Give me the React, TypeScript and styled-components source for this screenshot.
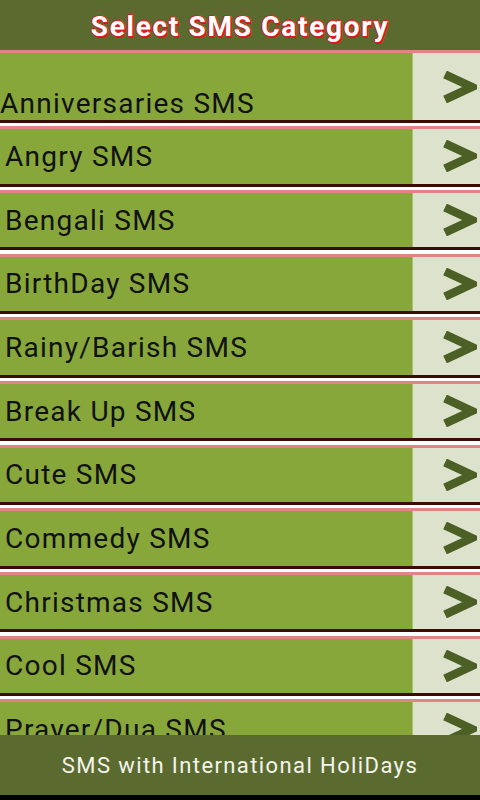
import React from "react";
import styled, { createGlobalStyle } from "styled-components";

const Global = createGlobalStyle`
  html, body { margin: 0; padding: 0; background: #000; }
  body { font-family: Roboto, "Noto Sans", "Liberation Sans", sans-serif; }
`;

const Screen = styled.div`
  width: 480px;
  height: 800px;
  display: flex;
  flex-direction: column;
  overflow: hidden;
  background: #000;
`;

const Header = styled.header`
  height: 50px;
  flex: none;
  background: #5b6b30;
  display: flex;
  align-items: center;
  justify-content: center;
  padding-top: 2px;
  box-sizing: border-box;
`;

const Title = styled.h1`
  margin: 0;
  font-family: Roboto, "Liberation Sans", sans-serif;
  font-weight: 700;
  font-size: 28px;
  color: #fff;
  letter-spacing: 1.7px;
  text-shadow: 1px 0 0 #e02020, -1px 0 0 #e02020, 0 1px 0 #e02020,
    0 -1px 0 #e02020, 1.5px 1.5px 0 #d01818;
`;

const List = styled.div`
  flex: 1;
  overflow: hidden;
  background: #fff;
  display: flex;
  flex-direction: column;
`;

const Item = styled.div`
  flex: none;
  display: flex;
  flex-direction: column;
  border-top: 3px solid #e08484;
  border-bottom: 3px solid #3a0c04;
  margin-bottom: 3.33px;
`;

const Content = styled.div<{ $first?: boolean }>`
  height: ${(p) => (p.$first ? 67 : 54.33)}px;
  display: flex;
  align-items: stretch;
`;

const Label = styled.div<{ $first?: boolean }>`
  flex: 1;
  background: #87a73b;
  display: flex;
  align-items: ${(p) => (p.$first ? "flex-end" : "center")};
  padding-left: ${(p) => (p.$first ? 0 : 5)}px;
  padding-top: ${(p) => (p.$first ? 0 : 2)}px;
  font-family: Roboto, "Liberation Sans", sans-serif;
  font-size: 28px;
  letter-spacing: 1.25px;
  line-height: 1.1;
  color: #111;
  white-space: nowrap;
  overflow: hidden;
  border-right: 1px solid #a9c168;
`;

const Panel = styled.div`
  width: 67px;
  flex: none;
  background: #dce2cb;
  display: flex;
  align-items: center;
  justify-content: flex-end;
  padding-right: 3px;
  box-sizing: border-box;
`;

const Footer = styled.footer`
  height: 60px;
  flex: none;
  background: #5b6b30;
  display: flex;
  align-items: center;
  justify-content: center;
  color: #f4f4ec;
  font-family: Roboto, "Liberation Sans", sans-serif;
  font-size: 22px;
  letter-spacing: 1.4px;
`;

const BottomBar = styled.div`
  height: 5px;
  flex: none;
  background: #000;
`;

const Arrow = () => (
  <svg width="35" height="32" viewBox="0 0 35 32">
    <polyline
      points="3,3.5 30,16 3,28.5"
      fill="none"
      stroke="#4c5f25"
      strokeWidth="8.5"
      strokeLinejoin="miter"
      strokeMiterlimit="4"
    />
  </svg>
);

const categories = [
  "Anniversaries SMS",
  "Angry SMS",
  "Bengali SMS",
  "BirthDay SMS",
  "Rainy/Barish SMS",
  "Break Up SMS",
  "Cute SMS",
  "Commedy SMS",
  "Christmas SMS",
  "Cool SMS",
  "Prayer/Dua SMS",
];

export default function App() {
  return (
    <>
      <Global />
      <Screen>
        <Header>
          <Title>Select SMS Category</Title>
        </Header>
        <List>
          {categories.map((c, i) => (
            <Item key={c}>
              <Content $first={i === 0}>
                <Label $first={i === 0}>{c}</Label>
                <Panel>
                  <Arrow />
                </Panel>
              </Content>
            </Item>
          ))}
        </List>
        <Footer>SMS with International HoliDays</Footer>
        <BottomBar />
      </Screen>
    </>
  );
}
